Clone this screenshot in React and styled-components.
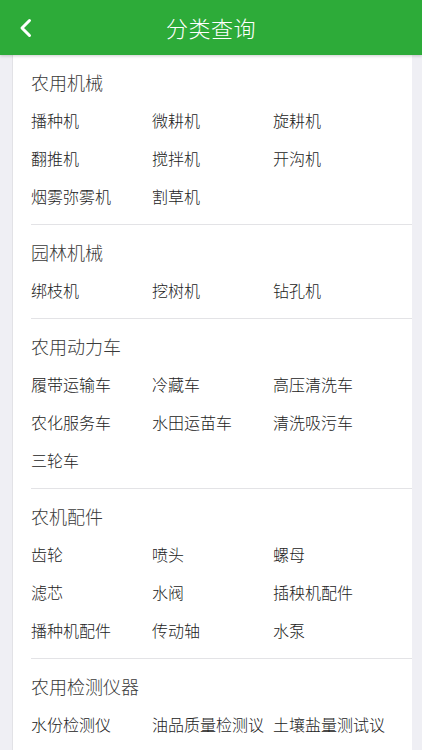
import React from 'react'
import styled, { createGlobalStyle } from 'styled-components'

const GlobalStyle = createGlobalStyle`
  html, body {
    margin: 0;
    padding: 0;
    background: #efeff4;
    font-family: "Noto Sans CJK SC", "Noto Sans", sans-serif;
  }
`

const Page = styled.div`
  width: 422px;
  min-height: 750px;
  background: #efeff4;
`

const Header = styled.div`
  position: relative;
  height: 55px;
  background: #2dab39;
  display: flex;
  align-items: center;
  justify-content: center;
  box-shadow: 0 1px 3px rgba(0, 0, 0, 0.2);
  z-index: 1;
`

const BackButton = styled.div`
  position: absolute;
  left: 18px;
  top: 17px;
  width: 16px;
  height: 22px;
  display: flex;
`

const Title = styled.h1`
  margin: 0;
  color: #fff;
  font-size: 22px;
  font-weight: 300;
  line-height: 55px;
  letter-spacing: 0.5px;
`

const Card = styled.div`
  margin: 0 10px 0 12px;
  background: #fff;
  border-left: 1px solid #e2e2e6;
  min-height: 695px;
`

const Section = styled.div`
  margin-left: 18px;
  padding: 8px 0 9px;
  border-top: ${props => props.first ? 'none' : '1px solid #e3e3e6'};
`

const SectionTitle = styled.div`
  font-size: 18px;
  font-weight: 300;
  line-height: 38px;
  color: #3a3a3a;
`

const Grid = styled.div`
  display: grid;
  grid-template-columns: 121px 121px 1fr;
`

const Item = styled.div`
  font-size: 16px;
  font-weight: 300;
  line-height: 38px;
  color: #222;
  white-space: nowrap;
`

const data = [
  { title: '农用机械', items: ['播种机', '微耕机', '旋耕机', '翻推机', '搅拌机', '开沟机', '烟雾弥雾机', '割草机'] },
  { title: '园林机械', items: ['绑枝机', '挖树机', '钻孔机'] },
  { title: '农用动力车', items: ['履带运输车', '冷藏车', '高压清洗车', '农化服务车', '水田运苗车', '清洗吸污车', '三轮车'] },
  { title: '农机配件', items: ['齿轮', '喷头', '螺母', '滤芯', '水阀', '插秧机配件', '播种机配件', '传动轴', '水泵'] },
  { title: '农用检测仪器', items: ['水份检测仪', '油品质量检测议', '土壤盐量测试议'] },
]

const App = () => {
  return (
    <Page>
      <GlobalStyle />
      <Header>
        <BackButton>
          <svg width="16" height="22" viewBox="0 0 16 22">
            <polyline points="11.5,3.5 4,11 11.5,18.5" fill="none" stroke="#fff" strokeWidth="3" strokeLinecap="round" strokeLinejoin="round" />
          </svg>
        </BackButton>
        <Title>分类查询</Title>
      </Header>
      <Card>
        {data.map((section, i) => (
          <Section key={section.title} first={i === 0}>
            <SectionTitle>{section.title}</SectionTitle>
            <Grid>
              {section.items.map(item => (
                <Item key={item}>{item}</Item>
              ))}
            </Grid>
          </Section>
        ))}
      </Card>
    </Page>
  )
}

export default App
